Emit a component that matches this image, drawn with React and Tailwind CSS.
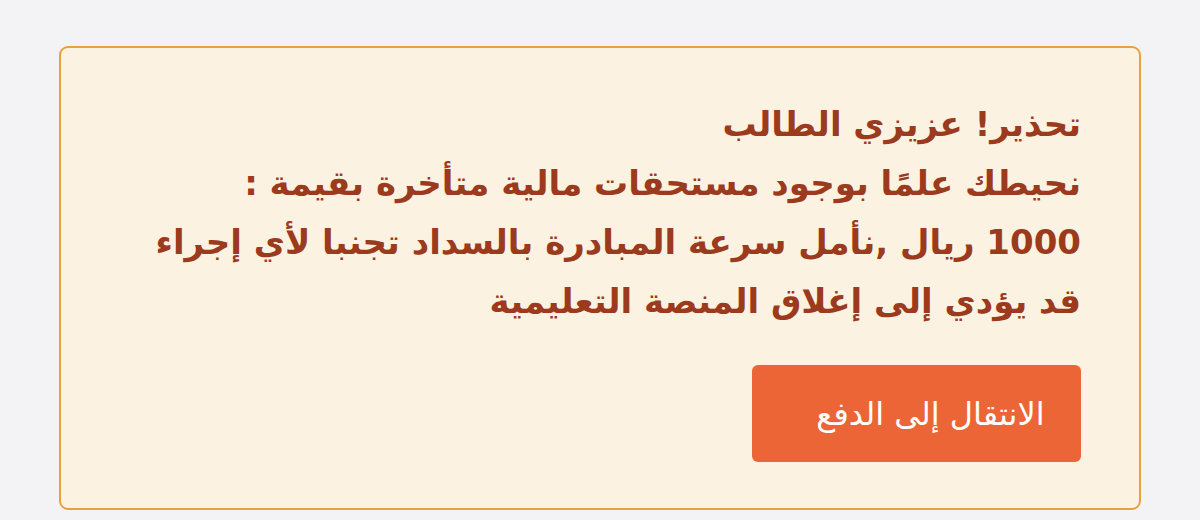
export default function App() {
  return (
    <div className="min-h-[520px] w-full bg-[#f3f3f5] px-[59px] pt-[46px] pb-[10px]">
      <div
        dir="rtl"
        className="rounded-[9px] border-2 border-[#e9a13f] bg-[#fcf2e2] pr-[58px] pl-[60px] pt-[47px] pb-[46px]"
        style={{ fontFamily: '"DejaVu Sans", "Noto Sans", sans-serif' }}
      >
        <div className="text-[34px] font-bold leading-[59px] text-[#9b3a1c]">
          <p className="whitespace-nowrap">تحذير! عزيزي الطالب</p>
          <p className="whitespace-nowrap">نحيطك علمًا بوجود مستحقات مالية متأخرة بقيمة :</p>
          <p className="whitespace-nowrap">1000 ريال ,نأمل سرعة المبادرة بالسداد تجنبا لأي إجراء</p>
          <p className="whitespace-nowrap">قد يؤدي إلى إغلاق المنصة التعليمية</p>
        </div>
        <div className="mt-[34px] flex">
          <button className="h-[97px] w-[329px] rounded-[6px] bg-[#ec6537] pl-[28px] text-[32px] text-white">
            الانتقال إلى الدفع
          </button>
        </div>
      </div>
    </div>
  );
}
